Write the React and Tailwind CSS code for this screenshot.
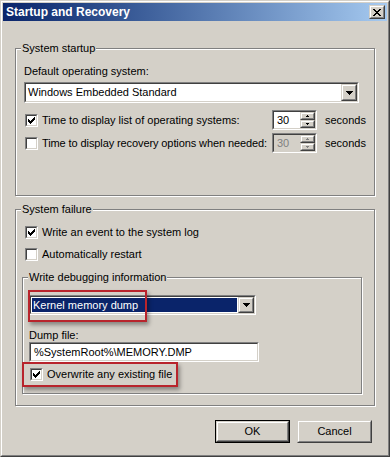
import React from "react";

const CHECK = [
  [0, 2], [1, 3], [2, 4], [3, 3], [4, 2], [5, 1], [6, 0],
];

const XMARK = [
  "XX....XX",
  ".XX..XX.",
  "..XXXX..",
  "...XX...",
  "..XXXX..",
  ".XX..XX.",
  "XX....XX",
];

const Sunken = ({ className, inner, children }) => (
  <div className={`border border-t-[#808080] border-l-[#808080] border-b-white border-r-white ${className}`}>
    <div className={`h-full border border-t-[#404040] border-l-[#404040] border-b-[#d4d0c8] border-r-[#d4d0c8] ${inner}`}>
      {children}
    </div>
  </div>
);

const Raised = ({ className, children }) => (
  <div className={`border border-t-[#d4d0c8] border-l-[#d4d0c8] border-b-[#404040] border-r-[#404040] bg-[#d4d0c8] ${className}`}>
    <div className="h-full border border-t-white border-l-white border-b-[#808080] border-r-[#808080] flex items-center justify-center">
      {children}
    </div>
  </div>
);

const Check = ({ checked }) => (
  <Sunken className="w-[13px] h-[13px] shrink-0" inner="bg-white flex items-center justify-center">
    {checked && (
      <svg width="7" height="7" viewBox="0 0 7 7" shapeRendering="crispEdges">
        {CHECK.map(([x, y]) => (
          <rect key={x} x={x} y={y} width="1" height="3" fill="#000" />
        ))}
      </svg>
    )}
  </Sunken>
);

const DropArrow = () => (
  <svg width="7" height="4" viewBox="0 0 7 4" shapeRendering="crispEdges">
    <path d="M0 0h7v1H6v1H5v1H4v1H3V3H2V2H1V1H0z" fill="#000" />
  </svg>
);

const Select = ({ className, value, selected }) => (
  <Sunken className={className} inner="bg-white flex">
    <div className="flex-1 flex items-center p-[1px]">
      <span className={`h-full flex-1 flex items-center pl-[1px] ${selected ? "bg-[#0a246a] text-white" : ""}`}>{value}</span>
    </div>
    <Raised className="w-[16px] h-full">
      <DropArrow />
    </Raised>
  </Sunken>
);

const Spin = ({ disabled }) => {
  const c = disabled ? "#808080" : "#000";
  return (
    <Sunken className="w-[45px] h-[20px] shrink-0" inner={`flex ${disabled ? "bg-[#d4d0c8]" : "bg-white"}`}>
      <span className={`flex-1 flex items-center pl-[3px] ${disabled ? "text-[#808080]" : ""}`}>30</span>
      <div className="w-[15px] flex flex-col">
        <Raised className="h-[8px]">
          <svg width="3" height="2" viewBox="0 0 3 2" shapeRendering="crispEdges">
            <path d="M1 0h1v1h1v1H0V1h1z" fill={c} />
          </svg>
        </Raised>
        <Raised className="h-[8px]">
          <svg width="3" height="2" viewBox="0 0 3 2" shapeRendering="crispEdges">
            <path d="M0 0h3v1H2v1H1V1H0z" fill={c} />
          </svg>
        </Raised>
      </div>
    </Sunken>
  );
};

const Group = ({ title, className, children }) => (
  <div className={`relative border border-[#808080] shadow-[inset_1px_1px_0_#fff,1px_1px_0_#fff] ${className}`}>
    <span className="absolute -top-[7px] left-[5px] px-[1px] bg-[#d4d0c8]">{title}</span>
    {children}
  </div>
);

const CheckRow = ({ checked, label, className }) => (
  <div className={`flex items-center h-[13px] ${className}`}>
    <Check checked={checked} />
    <span className="ml-[4px]">{label}</span>
  </div>
);

const Button = ({ label, primary }) => (
  <div className={`w-[75px] h-[23px] ${primary ? "border border-black" : ""}`}>
    <Raised className="h-full">
      <span>{label}</span>
    </Raised>
  </div>
);

export default function App() {
  return (
    <div className="w-[390px] h-[457px] bg-[#d4d0c8] border border-t-[#d4d0c8] border-l-[#d4d0c8] border-r-[#404040] border-b-[#404040] font-['Liberation_Sans',Arial,sans-serif] text-[11px] leading-[13px] text-black">
      <div className="h-full border border-t-white border-l-white border-r-[#808080] border-b-[#808080] p-[1px] flex flex-col">
        <div className="h-[18px] shrink-0 flex items-center bg-linear-to-r from-[#0a246a] to-[#a6caf0] pl-[3px]">
          <span className="font-bold text-white text-[12px]">Startup and Recovery</span>
          <Raised className="ml-auto mr-[2px] w-[16px] h-[14px]">
            <svg width="8" height="7" viewBox="0 0 8 7" shapeRendering="crispEdges">
              {XMARK.map((row, y) =>
                row.split("").map((ch, x) =>
                  ch === "X" ? <rect key={`${x}-${y}`} x={x} y={y} width="1" height="1" fill="#000" /> : null
                )
              )}
            </svg>
          </Raised>
        </div>

        <div className="px-[12px] flex flex-col">
          <Group title="System startup" className="mt-[27px] h-[148px] pt-[16px] pl-[8px]">
            <div>Default operating system:</div>
            <Select className="mt-[4px] w-[335px] h-[21px]" value="Windows Embedded Standard" />
            <div className="mt-[7px] flex items-center h-[20px]">
              <div className="w-[248px] flex items-center">
                <div className="ml-[1px]">
                  <Check checked />
                </div>
                <span className="ml-[4px]">Time to display list of operating systems:</span>
              </div>
              <Spin />
              <span className="ml-[8px]">seconds</span>
            </div>
            <div className="mt-[3px] flex items-center h-[20px]">
              <div className="w-[248px] flex items-center">
                <div className="ml-[1px]">
                  <Check />
                </div>
                <span className="ml-[4px] tracking-[-0.1px]">Time to display recovery options when needed:</span>
              </div>
              <Spin disabled />
              <span className="ml-[8px]">seconds</span>
            </div>
          </Group>

          <Group title="System failure" className="mt-[13px] h-[197px] pt-[16px] pl-[6px]">
            <CheckRow className="ml-[3px]" checked label="Write an event to the system log" />
            <CheckRow className="ml-[3px] mt-[9px]" label="Automatically restart" />
            <Group title="Write debugging information" className="mt-[16px] w-[340px] h-[117px] pt-[17px] pl-[6px]">
              <Select className="w-[227px] h-[20px]" value="Kernel memory dump" selected />
              <div className="mt-[14px]">Dump file:</div>
              <Sunken className="w-[230px] h-[20px]" inner="bg-white flex items-center pl-[3px]">
                <span>{"%SystemRoot%\\MEMORY.DMP"}</span>
              </Sunken>
              <CheckRow className="ml-[1px] mt-[6px]" checked label="Overwrite any existing file" />
              <div className="absolute left-[5px] top-[12px] w-[119px] h-[32px] border-2 border-[#b8242c] shadow-[2px_3px_4px_rgba(0,0,0,0.35)]" />
              <div className="absolute -left-[1px] top-[84px] w-[156px] h-[25px] border-2 border-[#b8242c] shadow-[2px_3px_4px_rgba(0,0,0,0.35)]" />
            </Group>
          </Group>

          <div className="mt-[14px] flex justify-end gap-[7px] pr-[3px]">
            <Button label="OK" primary />
            <Button label="Cancel" />
          </div>
        </div>
      </div>
    </div>
  );
}
